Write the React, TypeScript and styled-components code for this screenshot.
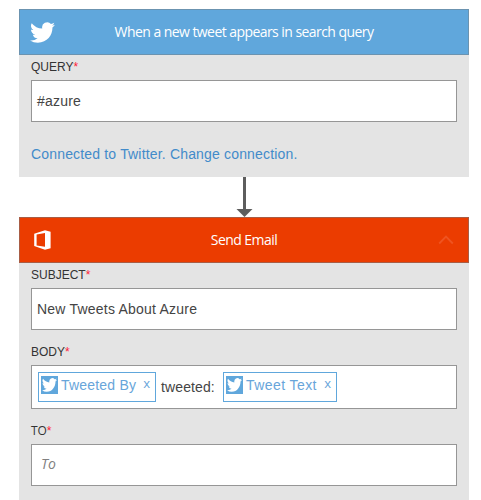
import React from "react";
import styled, { createGlobalStyle } from "styled-components";

const GlobalStyle = createGlobalStyle`
  * { box-sizing: border-box; }
  body {
    margin: 0;
    background: #fff;
    color: #444;
    font: 14px/20px "Liberation Sans", Arial, sans-serif;
    overflow: hidden;
  }
`;

const Flow = styled.main`
  display: flex;
  flex-direction: column;
  width: 450px;
  height: 500px;
  padding-top: 9px;
  margin-left: 19px;
  overflow: hidden;
`;

const Card = styled.section<{ $height: number }>`
  flex: none;
  height: ${(p) => p.$height}px;
  background: #e4e4e4;
`;

const Header = styled.header<{ $color: string; $border: string }>`
  display: grid;
  grid-template-columns: 44px 1fr 44px;
  align-items: center;
  height: 46px;
  background: ${(p) => p.$color};
  border: 1px solid ${(p) => p.$border};
  color: #fff;
`;

const Title = styled.h2<{ $tracking: number }>`
  margin: 0;
  font: 400 14px/20px "Open Sans", "Noto Sans", sans-serif;
  letter-spacing: ${(p) => p.$tracking}px;
  text-align: center;
  white-space: nowrap;
`;

const IconSlot = styled.span`
  display: flex;
  justify-content: center;
`;

const Fields = styled.div`
  display: flex;
  flex-direction: column;
  padding: 0 12px;
`;

const Label = styled.label<{ $top: number; $segoe?: boolean }>`
  height: 14px;
  margin-top: ${(p) => p.$top}px;
  font-size: 12px;
  line-height: 14px;
  color: #333;
  ${(p) => p.$segoe && `font-family: "Open Sans", sans-serif; letter-spacing: -0.1px;`}
`;

const Required = styled.span`
  color: #ff2038;
  font-family: "Liberation Sans", Arial, sans-serif;
`;

const Box = styled.div<{ $height?: number; $top: number }>`
  display: flex;
  align-items: center;
  height: ${(p) => p.$height ?? 42}px;
  margin-top: ${(p) => p.$top}px;
  padding: 0 5px;
  background: #fff;
  border: 1px solid #969696;
  white-space: pre;
`;

const TokenRow = styled.div`
  display: flex;
  align-items: center;
  padding-left: 1px;
`;

const Value = styled.span`
  letter-spacing: 0.22px;
`;

const Placeholder = styled.span`
  padding-left: 4px;
  margin-top: -3px;
  color: #808080;
  font: italic 14px/20px "Open Sans", sans-serif;
`;

const Between = styled.span`
  width: 67px;
  padding-left: 5px;
  letter-spacing: 0.12px;
`;

const Connection = styled.a`
  margin-top: 22px;
  color: #428bca;
  letter-spacing: 0.17px;
  white-space: nowrap;
`;

const Token = styled.span<{ $width: number }>`
  display: flex;
  width: ${(p) => p.$width}px;
  height: 30px;
  padding: 3px 2px;
  border: 1px solid #60a7dc;
  color: #68a5da;
`;

const TokenIcon = styled.span`
  display: flex;
  align-items: center;
  justify-content: center;
  width: 17px;
  height: 18px;
  margin-right: 3px;
  background: #60a7dc;
`;

const TokenText = styled.span<{ $tracking: number }>`
  line-height: 18px;
  letter-spacing: ${(p) => p.$tracking}px;
`;

const Remove = styled.span`
  margin-left: auto;
  padding-right: 3px;
  font: 13px/14px "Open Sans", sans-serif;
`;

const Connector = styled.div`
  display: flex;
  justify-content: center;
  flex: none;
  height: 40px;
`;

const Bird = ({ width, height }: { width: number; height: number }) => (
  <svg width={width} height={height} viewBox="0 2 24 20" preserveAspectRatio="none" fill="#fff">
    <path d="M23.95 4.57a10 10 0 0 1-2.82.77 4.96 4.96 0 0 0 2.16-2.72c-.95.55-2 .95-3.13 1.18a4.92 4.92 0 0 0-8.38 4.48A13.9 13.9 0 0 1 1.64 3.16a4.92 4.92 0 0 0 1.52 6.57 4.9 4.9 0 0 1-2.23-.61v.06c0 2.38 1.7 4.37 3.95 4.83a5 5 0 0 1-2.21.08 4.94 4.94 0 0 0 4.6 3.42A9.87 9.87 0 0 1 0 19.54a13.97 13.97 0 0 0 7.55 2.21c9.05 0 14-7.5 14-13.98 0-.21 0-.42-.02-.63a9.94 9.94 0 0 0 2.42-2.57z" />
  </svg>
);

const OfficeMark = () => (
  <svg width="17" height="20" viewBox="0 0 17 20" fill="#fff">
    <path fillRule="evenodd" d="M.2 3.7 11 .2l5.6 1.6v16.4L11 19.8.2 15.9ZM2.6 4.6v10.8l8.4 1.4V3Z" />
  </svg>
);

const Chevron = () => (
  <svg width="16" height="10" viewBox="0 0 16 10" fill="none" stroke="#ef5420" strokeWidth="1.8">
    <path d="m1.2 8.5 6.8-7 6.8 7" />
  </svg>
);

const Name = ({ text, top, segoe }: { text: string; top: number; segoe?: boolean }) => (
  <Label $top={top} $segoe={segoe}>
    {text}
    <Required>*</Required>
  </Label>
);

const TweetToken = ({ text, width, tracking }: { text: string; width: number; tracking: number }) => (
  <Token $width={width}>
    <TokenIcon><Bird width={15} height={14} /></TokenIcon>
    <TokenText $tracking={tracking}>{text}</TokenText>
    <Remove>x</Remove>
  </Token>
);

export default function App() {
  return (
    <>
      <GlobalStyle />
      <Flow>
        <Card $height={168}>
          <Header $color="#60a7dc" $border="#6b93b0">
            <IconSlot><Bird width={25} height={21} /></IconSlot>
            <Title $tracking={-0.56}>When a new tweet appears in search query</Title>
          </Header>
          <Fields>
            <Name text="QUERY" top={5} />
            <Box $top={6}><Value>#azure</Value></Box>
            <Connection>Connected to Twitter. Change connection.</Connection>
          </Fields>
        </Card>
        <Connector>
          <svg width="18" height="40" viewBox="0 0 18 40" fill="#5d5d5d">
            <path d="M8 0h3v32h6.5l-8 8-8-8H8Z" />
          </svg>
        </Connector>
        <Card $height={283}>
          <Header $color="#eb3c00" $border="#a85d45">
            <IconSlot><OfficeMark /></IconSlot>
            <Title $tracking={-0.56}>Send Email</Title>
            <IconSlot><Chevron /></IconSlot>
          </Header>
          <Fields>
            <Name text="SUBJECT" top={5} />
            <Box $top={6}><Value>New Tweets About Azure</Value></Box>
            <Name text="BODY" top={15} />
            <Box $top={6} $height={44}>
              <TokenRow>
                <TweetToken text="Tweeted By" width={118} tracking={0.2} />
                <Between>tweeted:</Between>
                <TweetToken text="Tweet Text" width={114} tracking={0.42} />
              </TokenRow>
            </Box>
            <Name text="TO" top={15} segoe />
            <Box $top={6}><Placeholder>To</Placeholder></Box>
          </Fields>
        </Card>
      </Flow>
    </>
  );
}
